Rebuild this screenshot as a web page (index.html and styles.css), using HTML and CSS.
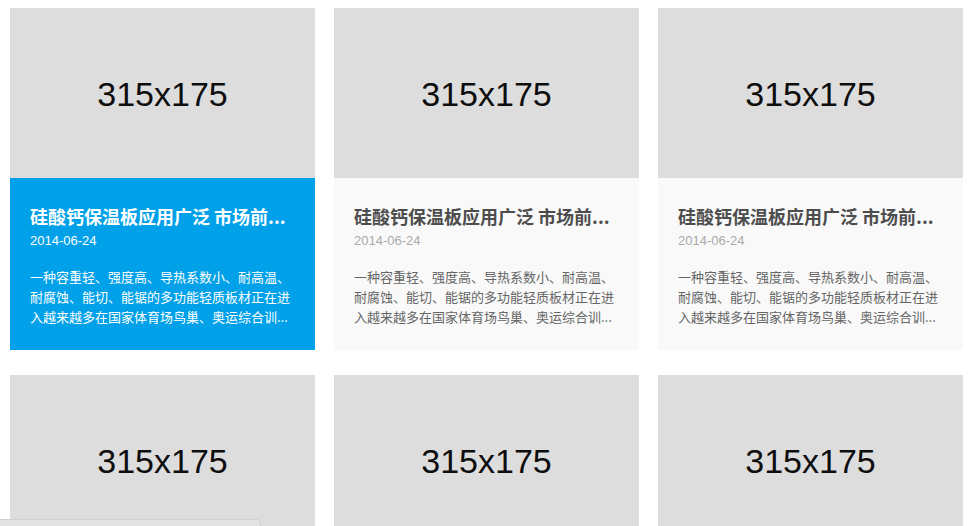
FILE: index.html
```html
<!DOCTYPE html>
<html lang="zh-CN">
<head>
<meta charset="utf-8">
<title>新闻列表</title>
<link rel="stylesheet" href="styles.css">
</head>
<body>
<div class="grid">
  <div class="card active">
    <div class="thumb">315x175</div>
    <div class="info">
      <h3 class="title">硅酸钙保温板应用广泛 市场前...</h3>
      <div class="date">2014-06-24</div>
      <p class="desc">一种容重轻、强度高、导热系数小、耐高温、耐腐蚀、能切、能锯的多功能轻质板材正在进入越来越多在国家体育场鸟巢、奥运综合训...</p>
    </div>
  </div>
  <div class="card">
    <div class="thumb">315x175</div>
    <div class="info">
      <h3 class="title">硅酸钙保温板应用广泛 市场前...</h3>
      <div class="date">2014-06-24</div>
      <p class="desc">一种容重轻、强度高、导热系数小、耐高温、耐腐蚀、能切、能锯的多功能轻质板材正在进入越来越多在国家体育场鸟巢、奥运综合训...</p>
    </div>
  </div>
  <div class="card">
    <div class="thumb">315x175</div>
    <div class="info">
      <h3 class="title">硅酸钙保温板应用广泛 市场前...</h3>
      <div class="date">2014-06-24</div>
      <p class="desc">一种容重轻、强度高、导热系数小、耐高温、耐腐蚀、能切、能锯的多功能轻质板材正在进入越来越多在国家体育场鸟巢、奥运综合训...</p>
    </div>
  </div>
  <div class="card">
    <div class="thumb">315x175</div>
    <div class="info">
      <h3 class="title">硅酸钙保温板应用广泛 市场前...</h3>
      <div class="date">2014-06-24</div>
      <p class="desc">一种容重轻、强度高、导热系数小、耐高温、耐腐蚀、能切、能锯的多功能轻质板材正在进入越来越多在国家体育场鸟巢、奥运综合训...</p>
    </div>
  </div>
  <div class="card">
    <div class="thumb">315x175</div>
    <div class="info">
      <h3 class="title">硅酸钙保温板应用广泛 市场前...</h3>
      <div class="date">2014-06-24</div>
      <p class="desc">一种容重轻、强度高、导热系数小、耐高温、耐腐蚀、能切、能锯的多功能轻质板材正在进入越来越多在国家体育场鸟巢、奥运综合训...</p>
    </div>
  </div>
  <div class="card">
    <div class="thumb">315x175</div>
    <div class="info">
      <h3 class="title">硅酸钙保温板应用广泛 市场前...</h3>
      <div class="date">2014-06-24</div>
      <p class="desc">一种容重轻、强度高、导热系数小、耐高温、耐腐蚀、能切、能锯的多功能轻质板材正在进入越来越多在国家体育场鸟巢、奥运综合训...</p>
    </div>
  </div>
</div>
<div class="bottom-bar"></div>
</body>
</html>
```
FILE: styles.css
```css
* { box-sizing: border-box; }
html, body { margin: 0; padding: 0; background: #fff; }
body {
  font-family: "Liberation Sans", "Noto Sans CJK SC", sans-serif;
  height: 526px;
  overflow: hidden;
}
.grid {
  display: grid;
  grid-template-columns: repeat(3, 305px);
  column-gap: 19px;
  row-gap: 25px;
  padding: 8px 0 0 10px;
}
.card {
  background: #f9f9f9;
  width: 305px;
}
.thumb {
  height: 170px;
  background: #dddddd;
  display: flex;
  align-items: center;
  justify-content: center;
  font-family: "Liberation Sans", Arial, sans-serif;
  font-size: 34px;
  color: #0d0d0d;
  padding-top: 3px;
}
.info {
  padding: 25px 20px 23px 20px;
}
.title {
  margin: 0;
  font-size: 18px;
  line-height: 26px;
  font-weight: bold;
  color: #4d4d4d;
  white-space: nowrap;
  font-family: "Noto Sans CJK SC", sans-serif;
}
.date {
  margin-top: 2px;
  font-size: 13px;
  line-height: 20px;
  color: #aaaaaa;
}
.desc {
  margin: 16px 0 0 0;
  font-size: 13px;
  line-height: 20px;
  height: 60px;
  color: #666666;
  font-family: "Noto Sans CJK SC", sans-serif;
}
.card.active { background: #00a1e9; }
.card.active .title,
.card.active .date,
.card.active .desc { color: #ffffff; }
.bottom-bar {
  position: fixed;
  left: -4px;
  top: 519px;
  width: 265px;
  height: 20px;
  background: #e3e3e3;
  border: 1px solid #cfcfcf;
  border-radius: 4px;
}
```
